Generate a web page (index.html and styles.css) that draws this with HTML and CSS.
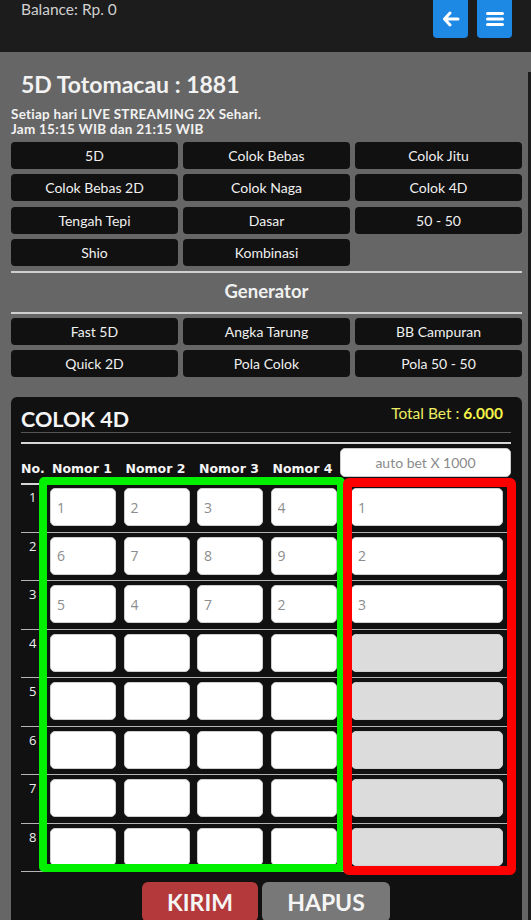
FILE: index.html
```html
<!DOCTYPE html>
<html lang="id">
<head>
<meta charset="utf-8">
<title>Colok 4D</title>
<link rel="stylesheet" href="styles.css">
</head>
<body>
<header class="topbar">
  <div class="balance">Balance: Rp. 0</div>
  <div class="top-actions">
    <button class="icon-btn" aria-label="Kembali">
      <svg width="18" height="16" viewBox="0 0 18 16"><path d="M8 2 L2.5 8 L8 14 M2.5 8 H16" fill="none" stroke="#fff" stroke-width="3" stroke-linecap="round" stroke-linejoin="round"/></svg>
    </button>
    <button class="icon-btn" aria-label="Menu">
      <svg width="18" height="16" viewBox="0 0 18 16"><path d="M1.5 2.5 H16.5 M1.5 8 H16.5 M1.5 13.5 H16.5" fill="none" stroke="#fff" stroke-width="3" stroke-linecap="round"/></svg>
    </button>
  </div>
</header>

<main class="main">
  <h1 class="title">5D Totomacau : 1881</h1>
  <p class="info">Setiap hari LIVE STREAMING 2X Sehari.<br>Jam 15:15 WIB dan 21:15 WIB</p>

  <nav class="menu-grid">
    <a class="menu-btn">5D</a>
    <a class="menu-btn">Colok Bebas</a>
    <a class="menu-btn">Colok Jitu</a>
    <a class="menu-btn">Colok Bebas 2D</a>
    <a class="menu-btn">Colok Naga</a>
    <a class="menu-btn">Colok 4D</a>
    <a class="menu-btn">Tengah Tepi</a>
    <a class="menu-btn">Dasar</a>
    <a class="menu-btn">50 - 50</a>
    <a class="menu-btn">Shio</a>
    <a class="menu-btn">Kombinasi</a>
  </nav>

  <div class="rule"></div>
  <h2 class="gen-title">Generator</h2>
  <div class="rule rule-gen"></div>

  <nav class="menu-grid">
    <a class="menu-btn">Fast 5D</a>
    <a class="menu-btn">Angka Tarung</a>
    <a class="menu-btn">BB Campuran</a>
    <a class="menu-btn">Quick 2D</a>
    <a class="menu-btn">Pola Colok</a>
    <a class="menu-btn">Pola 50 - 50</a>
  </nav>

  <section class="card">
    <div class="card-head">
      <h3 class="card-title">COLOK 4D</h3>
      <div class="total">Total Bet : <b>6.000</b></div>
    </div>
    <div class="rule2"></div>

    <div class="table">
      <div class="thead">
        <div class="th th-no">No.</div>
        <div class="th">Nomor 1</div>
        <div class="th">Nomor 2</div>
        <div class="th">Nomor 3</div>
        <div class="th">Nomor 4</div>
        <div class="th-bet"><input class="autobet" type="text" placeholder="auto bet X 1000"></div>
      </div>

      <div class="row">
        <div class="num">1</div>
        <input class="inp" value="1"><input class="inp" value="2"><input class="inp" value="3"><input class="inp" value="4">
        <div class="bet"><input class="inp" value="1"></div>
      </div>
      <div class="row">
        <div class="num">2</div>
        <input class="inp" value="6"><input class="inp" value="7"><input class="inp" value="8"><input class="inp" value="9">
        <div class="bet"><input class="inp" value="2"></div>
      </div>
      <div class="row">
        <div class="num">3</div>
        <input class="inp" value="5"><input class="inp" value="4"><input class="inp" value="7"><input class="inp" value="2">
        <div class="bet"><input class="inp" value="3"></div>
      </div>
      <div class="row">
        <div class="num">4</div>
        <input class="inp"><input class="inp"><input class="inp"><input class="inp">
        <div class="bet"><input class="inp" disabled></div>
      </div>
      <div class="row">
        <div class="num">5</div>
        <input class="inp"><input class="inp"><input class="inp"><input class="inp">
        <div class="bet"><input class="inp" disabled></div>
      </div>
      <div class="row">
        <div class="num">6</div>
        <input class="inp"><input class="inp"><input class="inp"><input class="inp">
        <div class="bet"><input class="inp" disabled></div>
      </div>
      <div class="row">
        <div class="num">7</div>
        <input class="inp"><input class="inp"><input class="inp"><input class="inp">
        <div class="bet"><input class="inp" disabled></div>
      </div>
      <div class="row">
        <div class="num">8</div>
        <input class="inp"><input class="inp"><input class="inp"><input class="inp">
        <div class="bet"><input class="inp" disabled></div>
      </div>

      <div class="frame-green"></div>
      <div class="frame-red"></div>
    </div>

    <div class="actions">
      <button class="act act-send">KIRIM</button>
      <button class="act act-clear">HAPUS</button>
    </div>
  </section>
</main>
</body>
</html>
```

FILE: styles.css
```css
* { box-sizing: border-box; }

html, body {
  margin: 0;
  padding: 0;
}

body {
  background: #1c1c1c;
  font-family: Lato, "Open Sans", sans-serif;
  color: #eee;
}

.topbar {
  height: 52px;
  display: flex;
  justify-content: space-between;
  align-items: flex-start;
  padding: 0 19px 0 21px;
}

.balance {
  font-size: 15.5px;
  line-height: 17px;
  color: #d0d0d0;
  padding-top: 1px;
}

.top-actions {
  display: flex;
  gap: 9px;
}

.icon-btn {
  width: 35px;
  height: 41px;
  margin-top: -3px;
  border: 0;
  border-radius: 4px;
  background: #1e88e5;
  display: flex;
  align-items: center;
  justify-content: center;
  padding: 3px 0 0;
}

.main {
  background:
    linear-gradient(#666, #666) top left / 100% 20px no-repeat,
    linear-gradient(to right, #666 528px, #1c1c1c 528px);
  padding: 18.5px 9px 20px 11px;
}

.title {
  margin: 0 0 0 10px;
  font-size: 23px;
  line-height: 27px;
  font-weight: 700;
  color: #f2f2f2;
}

.info {
  margin: 9px 0 5px;
  font-size: 13.5px;
  line-height: 15px;
  font-weight: 700;
  letter-spacing: 0.25px;
  color: #f2f2f2;
}

.menu-grid {
  display: grid;
  grid-template-columns: repeat(3, 1fr);
  column-gap: 5px;
  row-gap: 5.5px;
}

.menu-btn {
  height: 27px;
  line-height: 27px;
  background: #111;
  border-radius: 4px;
  text-align: center;
  font-size: 14px;
  color: #f0f0f0;
}

.rule {
  height: 2px;
  background: #cfcfcf;
  margin-top: 4.5px;
}

.gen-title {
  margin: 8px 0 0;
  text-align: center;
  font-size: 18.5px;
  line-height: 21.6px;
  font-weight: 700;
  color: #f0f0f0;
}

.rule-gen {
  margin: 9.5px 0 4px;
}

.card {
  margin-top: 19.5px;
  background: #111;
  border-radius: 6px;
  padding: 9px 11px 20px 10px;
}

.card-head {
  display: flex;
  justify-content: space-between;
  align-items: flex-start;
  border-bottom: 1px solid #555;
}

.card-title {
  margin: 0;
  font-size: 21.5px;
  line-height: 26.4px;
  font-weight: 700;
  color: #f5f5f5;
}

.total {
  margin: -2px 8px 0 0;
  font-size: 15.5px;
  line-height: 18px;
  color: #eded62;
}

.total b {
  color: #f5f54a;
}

.rule2 {
  margin-top: 9px;
  border-top: 2px solid #d6d6d6;
}

.table {
  position: relative;
}

.thead,
.row {
  display: grid;
  grid-template-columns: 21.5px repeat(4, 66px) 1fr;
  column-gap: 7.5px;
}

.thead {
  padding-top: 4px;
  align-items: end;
  border-bottom: 2px solid #d6d6d6;
}

.th {
  font-family: "DejaVu Sans", Verdana, sans-serif;
  font-weight: 700;
  font-size: 12.5px;
  line-height: 15px;
  color: #f5f5f5;
  white-space: nowrap;
  padding: 0 0 7px 2px;
}

.th-no {
  padding-left: 0;
}

.autobet {
  display: block;
  width: calc(100% + 4px);
  margin: 0 0 6px -4px;
  height: 29px;
  border: 1px solid #ccc;
  border-radius: 5px;
  background: #fff;
  text-align: center;
  font-family: Lato, "Open Sans", sans-serif;
  font-size: 14px;
  color: #888;
}

.autobet::placeholder {
  color: #8a8a8a;
}

.row {
  padding: 4px 0 5.5px;
  border-bottom: 1px solid #b5b5b5;
}

.thead + .row {
  padding-top: 3px;
}

.row:last-of-type {
  border-bottom: 0;
}

.num {
  font-family: "Open Sans", sans-serif;
  font-size: 13px;
  line-height: 15px;
  color: #eee;
  text-align: right;
  padding: 2px 6px 0 0;
}

.inp {
  display: block;
  width: 100%;
  height: 38px;
  border: 1px solid #cfcfcf;
  border-radius: 5px;
  background: #fff;
  padding: 0 6px;
  font-family: "Open Sans", sans-serif;
  font-size: 14px;
  color: #8c8c8c;
}

.inp:disabled {
  background: #dcdcdc;
}

.bet {
  padding: 0 8px 0 7px;
}

.frame-green {
  position: absolute;
  left: 18px;
  top: 33px;
  width: 306px;
  height: 395px;
  border: 8px solid #00f000;
  border-radius: 5px;
  pointer-events: none;
}

.frame-red {
  position: absolute;
  left: 322px;
  top: 34px;
  width: 173px;
  height: 397px;
  border: 9px solid #ff0000;
  border-radius: 6px;
  pointer-events: none;
}

.actions {
  display: flex;
  justify-content: center;
  gap: 4px;
  margin: 10px 0 0 0;
}

.act {
  height: 40px;
  border: 0;
  border-radius: 6px;
  font-family: Lato, "Open Sans", sans-serif;
  font-weight: 700;
  font-size: 23px;
  line-height: 40px;
  color: #f5f5f5;
  padding: 0;
}

.act-send {
  width: 116px;
  background: #b3393b;
}

.act-clear {
  width: 128px;
  background: #787878;
}
```
